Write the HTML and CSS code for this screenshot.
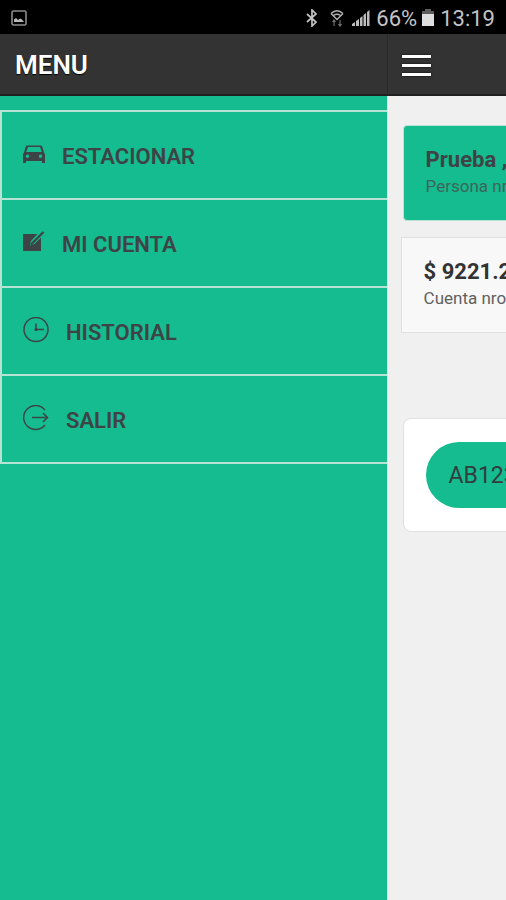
FILE: index.html
```html
<!DOCTYPE html>
<html lang="es">
<head>
<meta charset="utf-8">
<meta name="viewport" content="width=device-width, initial-scale=1">
<title>Menu</title>
<link rel="stylesheet" href="styles.css">
</head>
<body>
<div class="status">
  <svg class="status-picture" width="16" height="16" viewBox="0 0 16 16"><rect x="1" y="1" width="14" height="14" rx="1.5" fill="none" stroke="#8c8c8c" stroke-width="1.6"/><path d="M3 12V9.5L5 8l2 2 2-1.500 2 1L13 12z" fill="#b8b8b8"/></svg>
  <div class="status-right">
    <svg width="14" height="18" viewBox="0 0 14 18"><path d="M2 5l9 8-4 4V1l4 4-9 8" fill="none" stroke="#c4c4c4" stroke-width="1.7"/></svg>
    <svg class="status-wifi" width="16" height="18" viewBox="0 0 16 18"><path d="M2 4.500Q8-1 14 4.500M4.500 6.500Q8 4 11.500 6.500M2 4.500l6 6 6-6" fill="none" stroke="#b0b0b0" stroke-width="1.4"/><path d="M5 11v6M3.500 13L5 11l1.500 2M11 11v6M9.500 15l1.500 2 1.500-2" fill="none" stroke="#777" stroke-width="1.1"/></svg>
    <svg class="status-signal" width="19" height="18" viewBox="0 0 19 18"><path d="M1 17v-2l3-2v4zM5 17v-5l3-2v7zM9 17V9l2.500-2v10zM12.500 17V6L15 4v13zM16 17V3l2.500-2v16z" fill="#bdbdbd"/></svg>
    <span class="status-charge">66%</span>
    <svg class="status-battery" width="12" height="18" viewBox="0 0 12 18"><path d="M3 0h6v2h3v4H0V2h3z" fill="#5c5c5c"/><path d="M0 5h12v12H0z" fill="#dedede"/></svg>
    <span class="status-time">13:19</span>
  </div>
</div>
<div class="shell">
  <aside class="drawer">
    <header class="bar"><h1 class="bar-title">MENU</h1></header>
    <nav class="menu">
      <a class="menu-item" href="#estacionar">
        <svg class="menu-icon" width="22" height="26" viewBox="0 0 22 26"><path d="M4.500 4.500h13a2 2 0 0 1 1.800 1.300L21 11.500a3 3 0 0 1 1 2V22h-3v-2H3v2H0v-8.500a3 3 0 0 1 1-2L2.700 5.800A2 2 0 0 1 4.500 4.500zM5 6L3.200 11h15.600L17 6zM4.500 13.500a1.700 1.700 0 1 0 .01 0zM17.500 13.500a1.700 1.700 0 1 0 .01 0z" fill-rule="evenodd"/></svg>
        <span class="menu-label">ESTACIONAR</span>
      </a>
      <a class="menu-item" href="#cuenta">
        <svg class="menu-icon" width="22" height="26" viewBox="0 0 22 26"><path d="M0 5h14.500L8 12l-1.200 4.500L11.500 15 18 8.500V22H0z"/><path d="M20.500 3L9 14.500l-1 1.200" fill="none" stroke="#3e4346" stroke-width="2.200"/></svg>
        <span class="menu-label">MI CUENTA</span>
      </a>
      <a class="menu-item" href="#historial">
        <svg class="menu-icon" width="26" height="26" viewBox="0 0 26 26"><g fill="none" stroke="#3e4346" stroke-width="1.500"><circle cx="13" cy="12.500" r="12"/><path d="M13 6.500v6h8"/></g><circle cx="13" cy="12.500" r="1.600"/></svg>
        <span class="menu-label">HISTORIAL</span>
      </a>
      <a class="menu-item" href="#salir">
        <svg class="menu-icon" width="26" height="26" viewBox="0 0 26 26"><g fill="none" stroke="#3e4346" stroke-width="1.500"><path d="M22 5a12 12 0 1 0 0 15M9 12.500h15.500M20 8l4.500 4.500L20 17"/></g></svg>
        <span class="menu-label">SALIR</span>
      </a>
    </nav>
  </aside>
  <main class="page">
    <header class="bar">
      <button class="toggle" type="button" aria-label="Menu"><span class="toggle-line"></span><span class="toggle-line"></span><span class="toggle-line"></span></button>
    </header>
    <div class="content">
      <section class="card person"><h2 class="card-title">Prueba ,</h2><p class="card-text">Persona nro</p></section>
      <section class="card account"><h2 class="card-title">$ 9221.2</h2><p class="card-text">Cuenta nro</p></section>
      <section class="card plates"><button class="plate" type="button">AB123</button></section>
    </div>
  </main>
</div>
</body>
</html>
```
FILE: styles.css
```css
* {
  box-sizing: border-box;
}

body {
  margin: 0;
  min-height: 100vh;
  display: flex;
  flex-direction: column;
  overflow-x: hidden;
  background: #f0f0f0;
  color: #333;
  font-family: Roboto, "Liberation Sans", sans-serif;
}

h1, h2, p {
  margin: 0;
}

svg {
  display: block;
  flex: none;
}

.status {
  display: flex;
  align-items: center;
  justify-content: space-between;
  height: 34px;
  padding: 2px 11px 0;
  background: #000;
  color: #c4c4c4;
  font-size: 22px;
}

.status-right {
  display: flex;
  align-items: center;
}

.status-wifi {
  margin-left: 10px;
}

.status-signal {
  margin: 0 6px;
}

.status-battery {
  margin: 0 6px 0 5px;
}

.shell {
  flex: 1;
  display: flex;
  overflow: hidden;
}

.drawer {
  flex: 0 0 76.4%;
  background: #14bc8f;
}

.page {
  flex: 0 0 100%;
  border-left: 1px solid #e2e8e5;
}

.bar {
  display: flex;
  align-items: center;
  height: 62px;
  padding: 2px 15px 0;
  background: #333;
  border-bottom: 2px solid #202020;
}

.page .bar {
  margin-left: -1px;
  border-left: 1px solid #292929;
  padding-left: 14px;
}

.bar-title {
  color: #fff;
  font-size: 26px;
  font-weight: 600;
  text-shadow: 0 1px 1px #000;
}

.toggle {
  display: flex;
  flex-direction: column;
  gap: 6px;
  width: 29px;
  padding: 0;
  border: 0;
  background: none;
}

.toggle-line {
  height: 3px;
  width: 100%;
  background: #fff;
  box-shadow: 0 0 2px #000;
}

.menu {
  margin-top: 14px;
  border: 2px solid #b5e2d2;
  border-width: 2px 0 0 2px;
}

.menu-item {
  display: flex;
  align-items: center;
  gap: 17px;
  height: 88px;
  padding: 2px 21px 0;
  border-bottom: 2px solid #b5e2d2;
  color: #3e4346;
  font-size: 22px;
  font-weight: 600;
  text-decoration: none;
}

.menu-icon {
  margin-bottom: 4px;
  fill: #3e4346;
}

.content {
  padding: 29px 15px;
}

.card {
  padding: 20px 22px;
  border: 1px solid #e0e0e0;
}

.card-title {
  font-size: 22px;
  line-height: 28px;
  font-weight: 700;
}

.card-text {
  font-size: 17px;
  line-height: 24px;
  color: #606060;
}

.person {
  height: 96px;
  background: #14bc8f;
  border-radius: 4px;
  border-color: #b9e5d7;
}

.person .card-title {
  color: #3e4346;
}

.person .card-text {
  color: #3c665b;
}

.account {
  margin: 16px -2px 0;
  height: 96px;
  background: #f8f8f8;
}

.plates {
  margin-top: 85px;
  padding: 23px 22px;
  background: #fff;
  border-radius: 8px;
}

.plate {
  display: block;
  width: 100%;
  height: 66px;
  padding: 0 23px;
  border: 0;
  border-radius: 33px;
  background: #14bc8f;
  color: #333d40;
  font: 400 23px Roboto, sans-serif;
  text-align: left;
}
```
